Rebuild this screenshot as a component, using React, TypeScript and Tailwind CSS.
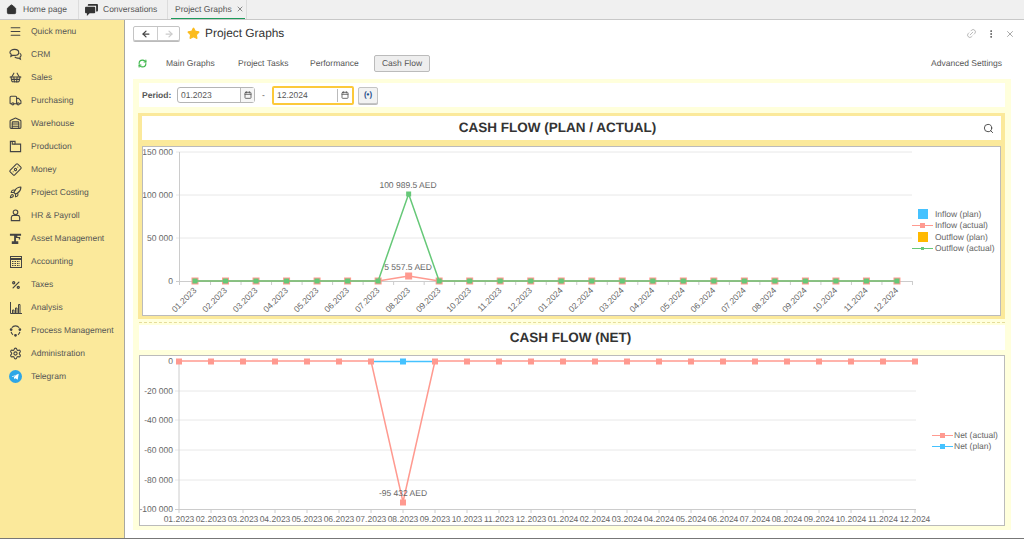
import { ArrowLeft, ArrowRight, Banknote, Calendar, EllipsisVertical, House, Link2, Menu, Percent, RefreshCw, Rocket, Search, Settings, ShoppingBasket, Star, Truck, Warehouse, X } from 'lucide-react';

const TelegramIcon = () => (
  <svg width="13" height="13" viewBox="0 0 24 24">
    <circle cx="12" cy="12" r="12" fill="#2ea6e6" />
    <path d="M5 12l13-5-2 11-4-3-2 2-1-4 6-5-8 5z" fill="#fff" />
  </svg>
);

const ChatsIcon = () => (
  <svg width="13" height="13" viewBox="0 0 14 14" fill="none" stroke="currentColor" strokeWidth="1.2">
    <path d="M6 1.5c2.6 0 4.5 1.4 4.5 3.3S8.6 8 6 8c-.7 0-1.3-.1-1.8-.3L2 9l.4-2.2C1.6 6.2 1 5.5 1 4.8 1 2.9 3.4 1.5 6 1.5z" />
    <path d="M11.5 5.500c1 .6 1.5 1.4 1.5 2.3 0 .9-.5 1.6-1.2 2.1l.5 2.1-2.3-1.2c-1.5.2-3-.3-3.8-1.3" />
  </svg>
);

const ProductionIcon = () => (
  <svg width="13" height="13" viewBox="0 0 14 14" fill="none" stroke="currentColor" strokeWidth="1.2">
    <path d="M1.5 1.5h5v3h6v8h-11z" />
    <path d="M3.5 1.5v3h3" />
  </svg>
);

const PersonIcon = () => (
  <svg width="13" height="13" viewBox="0 0 14 14" fill="none" stroke="currentColor" strokeWidth="1.2">
    <circle cx="7" cy="3.6" r="2.5" />
    <path d="M3.5 7h7l1 2v3.5h-9V9z" />
  </svg>
);

const CraneIcon = () => (
  <svg width="13" height="13" viewBox="0 0 14 14" fill="currentColor">
    <path d="M1 2h12v2H9v1.5h3V8h-1.5V6.5h-3V10H10v3H3v-3h2.5V4H1z" />
  </svg>
);

const LedgerIcon = () => (
  <svg width="14" height="14" viewBox="0 0 14 14" fill="none" stroke="currentColor">
    <rect x="1.5" y="1.5" width="11" height="11" />
    <path d="M1.5 4h11" strokeWidth="2" />
    <path d="M3 6.5h8M3 8.5h8M3 10.5h8" strokeDasharray="1.5 1" />
  </svg>
);

const BarsIcon = () => (
  <svg width="14" height="14" viewBox="0 0 14 14" fill="none" stroke="currentColor">
    <path d="M1.5 1v11.5H13" />
    <path d="M3.5 12V9H5v3M6.5 12V7H8v5M9.5 12V3.5H11V12" />
  </svg>
);

const ProcessIcon = () => (
  <svg width="13" height="13" viewBox="0 0 14 14" fill="none" stroke="currentColor" strokeWidth="1.2">
    <path d="M3 4a5 5 0 0 1 8 0M11.7 8.5a5 5 0 0 1-2 3M4.3 11.5a5 5 0 0 1-2-3" />
    <circle cx="7" cy="12.2" r="0.9" fill="currentColor" />
    <circle cx="2.3" cy="6" r="0.9" fill="currentColor" />
    <circle cx="11.7" cy="6" r="0.9" fill="currentColor" />
  </svg>
);

const BubblesIcon = () => (
  <svg width="13" height="12" viewBox="0 0 14 13" fill="#333">
    <path d="M4 0h9a1 1 0 0 1 1 1v6a1 1 0 0 1-1 1h-1V2H3V1a1 1 0 0 1 1-1z" />
    <path d="M1 3h9a1 1 0 0 1 1 1v5a1 1 0 0 1-1 1H5l-3 3v-3H1a1 1 0 0 1-1-1V4a1 1 0 0 1 1-1z" />
  </svg>
);

const menu = [
  { label: 'Quick menu', icon: <Menu size={13} /> },
  { label: 'CRM', icon: <ChatsIcon /> },
  { label: 'Sales', icon: <ShoppingBasket size={13} /> },
  { label: 'Purchasing', icon: <Truck size={13} /> },
  { label: 'Warehouse', icon: <Warehouse size={13} /> },
  { label: 'Production', icon: <ProductionIcon /> },
  { label: 'Money', icon: <Banknote size={13} className="-rotate-45" /> },
  { label: 'Project Costing', icon: <Rocket size={13} /> },
  { label: 'HR & Payroll', icon: <PersonIcon /> },
  { label: 'Asset Management', icon: <CraneIcon /> },
  { label: 'Accounting', icon: <LedgerIcon /> },
  { label: 'Taxes', icon: <Percent size={10} strokeWidth={3} /> },
  { label: 'Analysis', icon: <BarsIcon /> },
  { label: 'Process Management', icon: <ProcessIcon /> },
  { label: 'Administration', icon: <Settings size={13} /> },
  { label: 'Telegram', icon: <TelegramIcon /> },
];

const months = [
  '01.2023', '02.2023', '03.2023', '04.2023', '05.2023', '06.2023', '07.2023', '08.2023', '09.2023', '10.2023', '11.2023', '12.2023',
  '01.2024', '02.2024', '03.2024', '04.2024', '05.2024', '06.2024', '07.2024', '08.2024', '09.2024', '10.2024', '11.2024', '12.2024',
];

const RED = '#ff9a90';
const GREEN = '#66c878';
const BLUE = '#45c2ff';
const LABEL = '#666';

const PlanChart = () => {
  const px = (i: number) => 195 + i * 30.52;
  const red = months.map((_, i) => [px(i), i === 7 ? 276 : 281]);
  const green = months.map((_, i) => [px(i), i === 7 ? 194 : 281]);
  const pts = (a: number[][]) => a.map((p) => p.join(',')).join(' ');
  return (
    <svg viewBox="143 147 857 168" width="857" height="168" className="block" fontFamily="'Liberation Sans', Arial, sans-serif" fontSize="8.5" textRendering="geometricPrecision">
      {[152, 195, 238].map((y) => (
        <line key={y} x1="176" x2="912" y1={y} y2={y} stroke="#e8e8e8" />
      ))}
      <line x1="179.5" x2="179.5" y1="152" y2="285" stroke="#ccc" />
      <line x1="176" x2="912" y1="281.5" y2="281.5" stroke="#ccc" />
      {months.map((_, i) => (
        <line key={i} x1={180 + (i + 1) * 30.52} x2={180 + (i + 1) * 30.52} y1="281" y2="285" stroke="#ccc" />
      ))}
      {[['150 000', 155], ['100 000', 198], ['50 000', 241], ['0', 284]].map(([t, y]) => (
        <text key={t} x="173" y={y} textAnchor="end" fill={LABEL}>{t}</text>
      ))}
      {months.map((m, i) => (
        <text key={i} transform={`translate(${px(i) + 2} 291) rotate(-45)`} textAnchor="end" fill={LABEL}>{m}</text>
      ))}
      <polyline points={pts(red)} fill="none" stroke={RED} strokeWidth="1.5" />
      {red.map(([x, y], i) => (
        <rect key={i} x={x - 3.5} y={y - 3.5} width="7" height="7" fill={RED} />
      ))}
      <polyline points={pts(green)} fill="none" stroke={GREEN} strokeWidth="1.5" />
      {green.map(([x, y], i) => (
        <rect key={i} x={x - 2.5} y={y - 2.5} width="5" height="5" fill={GREEN} />
      ))}
      <text x="408" y="188" textAnchor="middle" fill={LABEL}>100 989.5 AED</text>
      <text x="408" y="270" textAnchor="middle" fill={LABEL}>5 557.5 AED</text>
      <rect x="918" y="209" width="10" height="10" fill={BLUE} />
      <rect x="918" y="232" width="10" height="10" fill="#ffb900" />
      <line x1="912" x2="933" y1="225.5" y2="225.5" stroke={RED} />
      <rect x="920" y="223" width="5" height="5" fill={RED} />
      <line x1="912" x2="933" y1="248.5" y2="248.5" stroke={GREEN} />
      <rect x="921" y="247" width="3" height="3" fill={GREEN} />
      {[['Inflow (plan)', 217], ['Inflow (actual)', 228], ['Outflow (plan)', 240], ['Outflow (actual)', 251]].map(([t, y]) => (
        <text key={t} x="935" y={y} fill={LABEL}>{t}</text>
      ))}
    </svg>
  );
};

const NetChart = () => {
  const px = (i: number) => 179 + i * 32;
  const red = months.map((_, i) => [px(i), i === 7 ? 502 : 361]);
  const pts = (a: number[][]) => a.map((p) => p.join(',')).join(' ');
  return (
    <svg viewBox="140 356 864 168" width="864" height="168" className="block" fontFamily="'Liberation Sans', Arial, sans-serif" fontSize="8.5" textRendering="geometricPrecision">
      {[391, 420, 450, 480].map((y) => (
        <line key={y} x1="175" x2="916" y1={y} y2={y} stroke="#e8e8e8" />
      ))}
      <line x1="175" x2="916" y1="509.5" y2="509.5" stroke="#ccc" />
      <line x1="179" x2="179" y1="361" y2="509" stroke="#ccc" />
      {months.map((_, i) => (
        <line key={i} x1={px(i)} x2={px(i)} y1="509" y2="513" stroke="#ccc" />
      ))}
      {[['0', 364], ['-20 000', 394], ['-40 000', 423], ['-60 000', 453], ['-80 000', 483], ['-100 000', 512]].map(([t, y]) => (
        <text key={t} x="173" y={y} textAnchor="end" fill={LABEL}>{t}</text>
      ))}
      {months.map((m, i) => (
        <text key={i} x={px(i)} y="522" textAnchor="middle" fill={LABEL}>{m}</text>
      ))}
      <line x1="371" x2="435" y1="361.5" y2="361.5" stroke={BLUE} strokeWidth="1.5" />
      <rect x={px(7) - 3} y="358.5" width="6" height="6" fill={BLUE} />
      <polyline points={pts(red)} fill="none" stroke={RED} strokeWidth="1.5" />
      {red.map(([x, y], i) => (
        <rect key={i} x={x - 3} y={y - 2.5} width="6" height="6" fill={RED} />
      ))}
      <text x="403" y="496" textAnchor="middle" fill={LABEL}>-95 432 AED</text>
      <line x1="932" x2="953" y1="435.5" y2="435.5" stroke={RED} />
      <rect x="940" y="433" width="5" height="5" fill={RED} />
      <line x1="932" x2="953" y1="446.5" y2="446.5" stroke={BLUE} />
      <rect x="940" y="444" width="5" height="5" fill={BLUE} />
      <text x="954" y="438" fill={LABEL}>Net (actual)</text>
      <text x="954" y="449" fill={LABEL}>Net (plan)</text>
    </svg>
  );
};

const DateField = ({ value, active }: { value: string; active?: boolean }) => (
  <div className={active ? 'flex h-[19px] w-[82px] items-center rounded-[2px] border-2 border-[#fcc93a] bg-white' : 'flex h-[16px] w-[78px] items-center rounded-[3px] border border-[#b5b5b5] bg-white'}>
    <span className="flex-1 pl-[3px]">{value}</span>
    <span className={active ? 'flex h-[13px] w-[15px] items-center justify-center border-l border-[#bbb]' : 'flex h-full w-[14px] items-center justify-center border-l border-[#bbb] bg-[#f6f6f6]'}>
      <Calendar size={8} strokeWidth={2.5} />
    </span>
  </div>
);

export default function App() {
  return (
    <div className="flex h-[539px] w-[1024px] flex-col overflow-hidden bg-white font-['Liberation_Sans',Arial,sans-serif] text-[8.5px] text-[#555] [text-rendering:geometricPrecision]">
      <div className="flex h-[20px] shrink-0 border-b border-[#c8c8c8] bg-[#f0f0f0]">
        <div className="flex w-[79px] items-center border-r border-[#dcdcdc] pl-[6px]">
          <House size={11} fill="#333" stroke="#333" />
          <span className="ml-[6px]">Home page</span>
        </div>
        <div className="flex w-[89px] items-center border-r border-[#dcdcdc] pl-[6px]">
          <BubblesIcon />
          <span className="ml-[5px]">Conversations</span>
        </div>
        <div className="flex w-[79px] items-center border-r border-[#dcdcdc] pl-[3px]">
          <div className="flex h-[18px] w-[74px] items-center gap-[4px] whitespace-nowrap border-b border-[#1d9a5b] pl-[4px]">
            <span>Project Graphs</span>
            <X size={8} />
          </div>
        </div>
      </div>

      <div className="flex min-h-0 flex-1 border-b border-[#777]">
        <aside className="w-[125px] shrink-0 border-r border-[#a8a8a0] bg-[#fbe99b]">
          {menu.map((item) => (
            <div key={item.label} className="flex h-[23px] items-center">
              <span className="flex w-[31px] justify-center text-[#444]">{item.icon}</span>
              <span>{item.label}</span>
            </div>
          ))}
        </aside>

        <main className="flex min-w-0 flex-1 flex-col pl-[8px] pr-[13px]">
          <div className="mt-[6px] flex h-[15px] items-center">
            <div className="flex h-[15px] w-[47px] rounded-[2px] border border-[#c4c4c4] shadow-[0_1px_0_#bbb]">
              <span className="flex w-[24px] items-center justify-center border-r border-[#ccc] text-[#444]"><ArrowLeft size={10} strokeWidth={3} /></span>
              <span className="flex flex-1 items-center justify-center text-[#ccc]"><ArrowRight size={10} strokeWidth={3} /></span>
            </div>
            <Star size={13} className="ml-[7px]" fill="#fbbc1e" stroke="#fbbc1e" />
            <span className="ml-[5px] pt-[1px] text-[11.9px] text-[#333]">Project Graphs</span>
            <div className="ml-auto flex items-center text-[#888]">
              <Link2 size={11} className="-rotate-45" strokeWidth={1.2} />
              <EllipsisVertical size={10} className="ml-[9px] text-[#444]" />
              <X size={10} className="ml-[9px] mr-[-4px] text-[#555]" strokeWidth={1.2} />
            </div>
          </div>

          <div className="mt-[14px] flex h-[17px] items-center">
            <span className="w-[33px]"><RefreshCw size={9} className="ml-[5px] text-[#3db64a]" strokeWidth={3} /></span>
            <span className="w-[72px]">Main Graphs</span>
            <span className="w-[72px]">Project Tasks</span>
            <span className="w-[64px]">Performance</span>
            <span className="flex h-[17px] w-[56px] items-center justify-center rounded-[2px] border border-[#bbb] bg-[#eee]">Cash Flow</span>
            <span className="ml-auto mr-[9px]">Advanced Settings</span>
          </div>

          <section className="mt-[7px] h-[451px] bg-[#ffffdc] px-[6px] pt-[4px]">
            <div className="flex h-[24px] items-center bg-white pl-[3px]">
              <b className="mr-[5px] w-[30px]">Period:</b>
              <DateField value="01.2023" />
              <span className="mx-[6px] w-[5px] text-center">-</span>
              <DateField value="12.2024" active />
              <span className="ml-[4px] flex h-[17px] w-[20px] items-center justify-center rounded-[2px] border border-[#c4c4c4] bg-[#f2f2f2] text-[8px] font-bold text-[#1f4e8c] shadow-[0_1px_0_#bbb]">(•)</span>
            </div>

            <div className="mt-[6px] -ml-[1px] h-[206px] border-x-[4px] border-y-[3px] border-[#fbe99b] bg-[#fbe99b]">
              <div className="relative flex h-[24px] items-center justify-center bg-white pr-[28px] pt-[1px] text-[13.5px] font-bold text-[#333]">
                CASH FLOW (PLAN / ACTUAL)
                <Search size={11} className="absolute right-[7px] text-[#444]" />
              </div>
              <div className="mt-[6px] h-[170px] border border-[#bbb] bg-white">
                <PlanChart />
              </div>
            </div>

            <div className="mt-[3px] border-t border-dashed border-[#e5dd9a]" />

            <div className="mt-[2px] flex h-[25px] items-center justify-center bg-white pr-[3px] pt-[1px] text-[13.5px] font-bold text-[#333]">
              CASH FLOW (NET)
            </div>
            <div className="mt-[5px] h-[171px] border border-[#bbb] bg-white">
              <NetChart />
            </div>
          </section>
        </main>
      </div>
    </div>
  );
}
